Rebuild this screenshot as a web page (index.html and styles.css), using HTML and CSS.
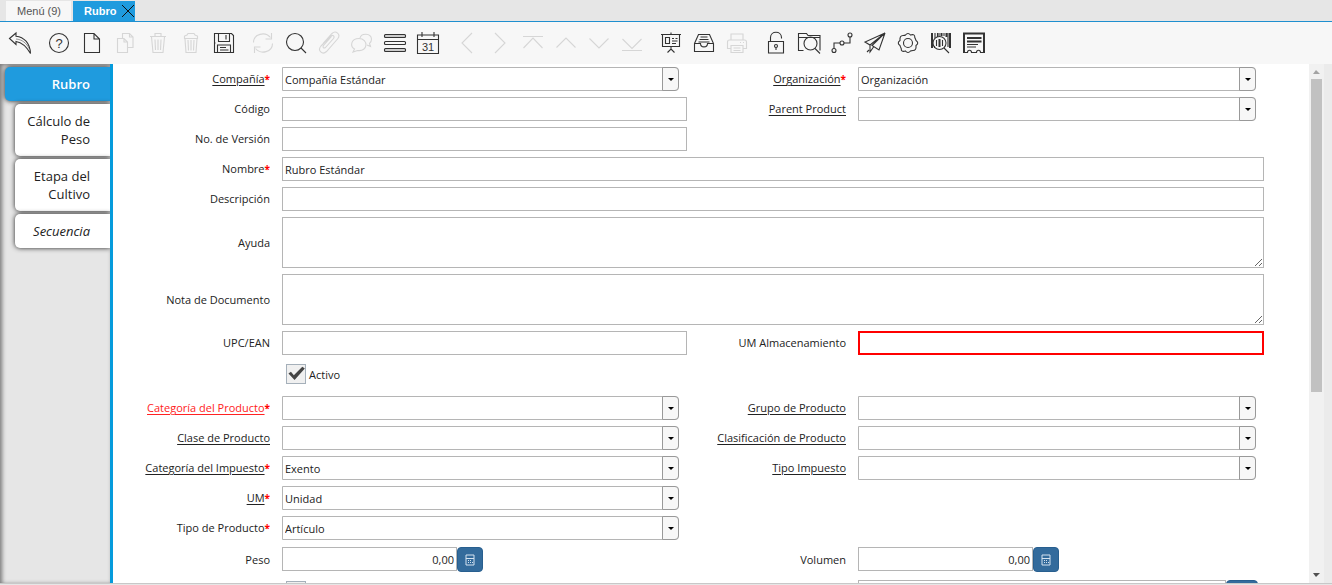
FILE: index.html
```html
<!DOCTYPE html>
<html lang="es">
<head>
    <meta charset="UTF-8">
    <meta name="viewport" content="width=device-width, initial-scale=1.0">
    <title>Rubro</title>
    <link rel="stylesheet" href="styles.css">
</head>
<body>
    <nav class="window-tabs">
        <button class="window-tab">Menú (9)</button>
        <button class="window-tab active">Rubro
            <svg class="close" viewBox="0 0 14 14"><path d="M1 1l12 12M13 1L1 13"/></svg>
        </button>
    </nav>

    <div class="toolbar">
        <div class="group">
            <button aria-label="Deshacer"><svg viewBox="0 0 24 24"><path d="M1.500 7.500L8 2v3.2C16 6 22 12 22.500 22.500 18.500 15.500 14 11.500 8 10.500v3z"/><path class="thin" d="M8 8c6 .5 10.500 4 13.500 10"/></svg></button>
        </div>
        <div class="group">
            <button aria-label="Ayuda"><svg viewBox="0 0 24 24"><circle cx="12" cy="12" r="9.500"/><text x="12" y="16.500" font-size="13">?</text></svg></button>
            <button aria-label="Nuevo"><svg viewBox="0 0 24 24"><path d="M4.500 2.500h9.500l5.500 5.500v13.500h-15zM14 2.500V8h5.500"/></svg></button>
            <button aria-label="Copiar" disabled><svg viewBox="0 0 24 24"><path d="M9.500 7V2.500h7l3.500 3.500v10.500h-5M16.500 2.500V6H20M4.500 7.500h6.500l3.500 3.500v10.500h-10zM11 7.500V11h3.500"/></svg></button>
            <button aria-label="Eliminar" disabled><svg viewBox="0 0 24 24"><path d="M4 5.500h16M9 5V2.500h6V5M5.500 6l1.500 15.500h10L18.500 6M9 8.500l.5 10.500M12 8.500V19M15 8.500l-.5 10.500"/></svg></button>
            <button aria-label="Eliminar registros" disabled><svg viewBox="0 0 24 24"><path d="M5.500 7.500V5L8 4l1-1.500h6L16 4l2.500 1v2.500zM6 8l1 13.500h10L18 8M9 9l.5 10.500M12 9v10.500M15 9l-.5 10.500"/></svg></button>
            <button aria-label="Guardar"><svg viewBox="0 0 24 24"><path d="M2.500 2.500h17l2 2v17h-19zM6.500 2.500v8h11v-8M5.500 21.500v-7.500h13v7.500M14 4v4.500M2.500 12h1"/><path d="M8 16.500h6M8 19h8.500"/></svg></button>
        </div>
        <div class="group">
            <button aria-label="Refrescar" disabled><svg viewBox="0 0 24 24"><path d="M2.500 11.500C2.500 3 14 0 19.500 6.500M20.500 2v6h-6M21.500 12.500c0 8.500-11.500 11.500-17 5M3.500 22v-6h6"/></svg></button>
            <button aria-label="Buscar"><svg viewBox="0 0 24 24"><circle cx="11" cy="11" r="8.500"/><path d="M17 17l5 5"/></svg></button>
            <button aria-label="Adjunto" disabled><svg viewBox="0 0 24 24"><path d="M8.500 16.500l8-9c1.500-2-.5-4-2.500-2.500L4 15c-4 4.500 1.500 9.500 5.500 5.500L20.500 8c4-5-2-9-5.500-5.500L6 12.500M8.500 16.500c-2 1.500-3-.5-2-2l8-9"/></svg></button>
            <button aria-label="Chat" disabled><svg viewBox="0 0 24 24"><path d="M10 7c1-5 11-5.500 11.500 1 0 2-.8 3.500-2 4.500l1 3-3.500-1.500M9 7.500c-8.500 0-9 8-4.500 10.500L3 21l4.500-1.500c11 1.500 11-12 1.500-12z"/></svg></button>
            <button aria-label="Vista de lista"><svg viewBox="0 0 24 24"><rect class="shade" x="1.500" y="3.500" width="21" height="3" rx="1"/><rect x="1.500" y="10.500" width="21" height="3" rx="1"/><rect class="shade" x="1.500" y="17.500" width="21" height="3" rx="1"/></svg></button>
            <button aria-label="Calendario"><svg viewBox="0 0 24 24"><path d="M1.500 4h21v18.500h-21zM1.500 8.500h21M6 1v5M18 1v5"/><text x="12" y="19.500" font-size="11">31</text></svg></button>
        </div>
        <div class="group">
            <button aria-label="Anterior" disabled><svg viewBox="0 0 24 24"><path d="M17 2L7 12l10 10"/></svg></button>
            <button aria-label="Siguiente" disabled><svg viewBox="0 0 24 24"><path d="M7 2l10 10L7 22"/></svg></button>
            <button aria-label="Primero" disabled><svg viewBox="0 0 24 24"><path d="M2 5.500h20M2.500 17L12 7l9.500 10"/></svg></button>
            <button aria-label="Registro anterior" disabled><svg viewBox="0 0 24 24"><path d="M2.500 16.500L12 7l9.500 9.500"/></svg></button>
            <button aria-label="Registro siguiente" disabled><svg viewBox="0 0 24 24"><path d="M2.500 7.500L12 17l9.500-9.500"/></svg></button>
            <button aria-label="Último" disabled><svg viewBox="0 0 24 24"><path d="M2.500 8L12 17.500 21.500 8M2 19.500h20"/></svg></button>
        </div>
        <div class="group">
            <button aria-label="Informe"><svg viewBox="0 0 24 24"><path d="M2 3.500h20M3.500 4v11.500h17V4M12 1.500v2M12 16v3M8.500 21.500L12 18l3.500 3.500M6.500 6.500h4v6h-4zM13 7.500h2M16.500 7.500h2M13 10h5.500M13 12.500h4"/></svg></button>
            <button aria-label="Archivo"><svg viewBox="0 0 24 24"><path d="M2.500 12.500l4-9h11l4 9v8h-19zM2.500 12.500h6c0 4.500 7 4.500 7 0h6M8.500 6h7M7.500 8.500h9M6.500 11h11"/></svg></button>
            <button aria-label="Imprimir" disabled><svg viewBox="0 0 24 24"><path d="M6 9V3h12v6M6 17.500H2.500V11c0-1 .5-2 2-2h15c1.500 0 2 1 2 2v6.500H18M6 14.500h12v7H6zM8.500 17h7M8.500 19.500h7M15 11.500h1M18 11.500h1"/></svg></button>
        </div>
        <div class="group">
            <button aria-label="Bloquear"><svg viewBox="0 0 24 24"><path d="M4.500 10.500h15v11.500h-15zM6.500 10.500V6.500c0-7 11-7 11 0v1"/><circle cx="12" cy="15" r="1.500"/><path d="M12 16.500v2.500"/></svg></button>
            <button aria-label="Visualizar"><svg viewBox="0 0 24 24"><path d="M6.500 19.500h-5v-17h8l1.500 2h12v15M1.500 6.500h21"/><circle cx="13.500" cy="12.500" r="6.500"/><path d="M18 17.500l5 5"/></svg></button>
            <button aria-label="Flujo de trabajo"><svg viewBox="0 0 24 24"><circle cx="4" cy="19.500" r="2"/><circle cx="12" cy="12" r="2"/><circle cx="20" cy="4" r="2"/><path d="M4 17.500V12h6M14 12h6V6"/></svg></button>
            <button aria-label="Solicitudes"><svg viewBox="0 0 24 24"><path d="M22 2L2 11l5 3zM22 2L7 14v7l3.500-5M22 2l-6 17-7-4.500zM4 21l2-2"/></svg></button>
            <button aria-label="Proceso"><svg viewBox="0 0 24 24"><path d="M9.500 4Q12 1 14.500 4 19 2.500 18.800 6.500 20 9 20 9.500 23.500 12 20 14.500 20.500 19.500 17 19.500 15 19.500 14.500 20 12 23 9.500 20 5 21.500 5.200 17.500 4 15 4 14.500.5 12 4 9.500 3.500 4.500 7 4.500 9 4.500 9.500 4z"/><circle cx="12" cy="12" r="4.500"/></svg></button>
            <button aria-label="Código de barras"><svg viewBox="0 0 24 24"><path class="bars" d="M3 2v15M21 2v15M17.500 2v4M12.500 2v3"/><path d="M6 2v5M8.500 2v4M10 2v3M15 2v3M19 2v14M5.500 15v2"/><circle cx="10.500" cy="12" r="6.500"/><path class="bars" d="M10.500 8v8"/><path d="M7.500 9v6M13.500 9v6M15 17l5 5"/></svg></button>
            <button aria-label="Recibo"><svg viewBox="0 0 24 24"><path class="bars" d="M2 22V2.500h20V22"/><path d="M1.500 21.500h4c0-3 4-3 4 0h5c0-3 4-3 4 0h4"/><path class="bars" d="M5 7h14.500M5 10.500h14.500"/><path d="M5 13.500h11M5 16h9"/></svg></button>
        </div>
    </div>

    <main>
        <aside>
            <button class="side-tab selected">Rubro</button>
            <button class="side-tab">Cálculo de Peso</button>
            <button class="side-tab">Etapa del Cultivo</button>
            <button class="side-tab detail">Secuencia</button>
        </aside>

        <form>
            <label class="link required" for="compania">Compañía</label>
            <div class="combo"><select id="compania"><option>Compañía Estándar</option></select></div>
            <label class="link required" for="organizacion">Organización</label>
            <div class="combo"><select id="organizacion"><option>Organización</option></select></div>

            <label for="codigo">Código</label>
            <input type="text" id="codigo">
            <label class="link" for="parent">Parent Product</label>
            <div class="combo"><select id="parent"><option></option></select></div>

            <label for="version">No. de Versión</label>
            <input type="text" id="version">

            <label class="required first" for="nombre">Nombre</label>
            <input type="text" class="wide" id="nombre" value="Rubro Estándar">

            <label for="descripcion">Descripción</label>
            <input type="text" class="wide" id="descripcion">

            <label for="ayuda">Ayuda</label>
            <textarea class="wide" id="ayuda"></textarea>

            <label for="nota">Nota de Documento</label>
            <textarea class="wide" id="nota"></textarea>

            <label for="upc">UPC/EAN</label>
            <input type="text" id="upc">
            <label for="almacen">UM Almacenamiento</label>
            <input type="text" class="invalid" id="almacen">

            <div class="check">
                <input type="checkbox" id="activo" checked>
                <label for="activo">Activo</label>
            </div>

            <label class="link required error first" for="categoria">Categoría del Producto</label>
            <div class="combo"><select id="categoria"><option></option></select></div>
            <label class="link" for="grupo">Grupo de Producto</label>
            <div class="combo"><select id="grupo"><option></option></select></div>

            <label class="link" for="clase">Clase de Producto</label>
            <div class="combo"><select id="clase"><option></option></select></div>
            <label class="link" for="clasificacion">Clasificación de Producto</label>
            <div class="combo"><select id="clasificacion"><option></option></select></div>

            <label class="link required" for="impuesto">Categoría del Impuesto</label>
            <div class="combo"><select id="impuesto"><option>Exento</option></select></div>
            <label class="link" for="tipo-impuesto">Tipo Impuesto</label>
            <div class="combo"><select id="tipo-impuesto"><option></option></select></div>

            <label class="link required" for="um">UM</label>
            <div class="combo"><select id="um"><option>Unidad</option></select></div>

            <label class="required first" for="tipo">Tipo de Producto</label>
            <div class="combo"><select id="tipo"><option>Artículo</option></select></div>

            <label class="first" for="peso">Peso</label>
            <div class="number">
                <input type="text" id="peso" value="0,00">
                <button type="button" aria-label="Calculadora"><svg viewBox="0 0 10 12"><path d="M1 1h8v10H1zM1 4.500h8M3 6.500h1M5 6.500h1M3 8.500h1M5 8.500h1M7 8.500h1"/></svg></button>
            </div>
            <label for="volumen">Volumen</label>
            <div class="number">
                <input type="text" id="volumen" value="0,00">
                <button type="button" aria-label="Calculadora"><svg viewBox="0 0 10 12"><path d="M1 1h8v10H1zM1 4.500h8M3 6.500h1M5 6.500h1M3 8.500h1M5 8.500h1M7 8.500h1"/></svg></button>
            </div>

            <div class="check last">
                <input type="checkbox" aria-label="Almacenado">
            </div>
            <div class="lookup">
                <input type="text" aria-label="Localizador">
                <button type="button" aria-label="Buscar localizador"></button>
            </div>
        </form>

        <div class="scrollbar">
            <span class="arrow up"></span>
            <div class="track"><div class="thumb"></div></div>
            <span class="arrow down"></span>
        </div>
    </main>
    <footer></footer>
</body>
</html>
```

FILE: styles.css
```css
*,
*::before,
*::after {
    box-sizing: border-box;
}
body {
    margin: 0;
    height: 100vh;
    display: flex;
    flex-direction: column;
    overflow: hidden;
    background-color: #ebebeb;
    font-family: "Open Sans", "Noto Sans", sans-serif;
    font-size: 11px;
    color: #222;
}
button {
    border: none;
    padding: 0;
    font-family: inherit;
    cursor: pointer;
}

/* window tabs */
.window-tabs {
    display: flex;
    gap: 2px;
    flex: none;
    height: 22px;
    padding: 1px 6px 0;
    background-color: #e6e6e6;
    border-bottom: 1px solid #1f8fcf;
}
.window-tab {
    display: flex;
    align-items: center;
    padding: 0 10px 0 11px;
    background-color: #f7f7f7;
    font-family: "Liberation Sans", Arial, sans-serif;
    font-size: 11px;
    color: #555;
}
.window-tab.active {
    gap: 5px;
    padding-right: 0;
    background-color: #1f9bde;
    font-weight: bold;
    color: #fff;
}
.close {
    width: 14px;
    height: 14px;
    fill: none;
    stroke: #111;
}

/* toolbar */
.toolbar {
    display: flex;
    gap: 15px;
    flex: none;
    height: 42px;
    padding: 9px 8px;
    background-color: #f7f7f7;
}
.group {
    display: flex;
    gap: 9px;
}
.toolbar button {
    width: 24px;
    height: 24px;
    background: none;
    color: #333;
}
.toolbar button:disabled {
    color: #d6d6d6;
}
.toolbar svg {
    display: block;
    width: 24px;
    height: 24px;
    fill: none;
    stroke: currentColor;
    stroke-width: 1.1;
}
.toolbar text {
    fill: currentColor;
    stroke: none;
    text-anchor: middle;
    font-family: "Liberation Sans", Arial, sans-serif;
}
.toolbar .thin {
    stroke-width: 0.5;
}
.toolbar .shade {
    fill: #ccc;
}
.toolbar .bars {
    stroke-width: 2;
}

main {
    display: flex;
    flex: 1;
    min-height: 0;
    padding-right: 8px;
}

/* side tabs */
aside {
    display: flex;
    flex-direction: column;
    align-items: flex-end;
    gap: 3px;
    flex: none;
    width: 113px;
    padding-top: 3px;
    overflow: hidden;
    background-color: #e6e6e6;
    border-right: 3px solid #059bdc;
    box-shadow: inset 2px 1px 4px #777;
}
.side-tab {
    width: 95px;
    padding: 8px 20px 8px 8px;
    background-color: #fff;
    border-radius: 5px 0 0 5px;
    box-shadow: 0 0 5px #222;
    font-size: 13px;
    line-height: 18px;
    text-align: right;
    color: #222;
}
.side-tab.selected {
    width: 105px;
    background-color: #1f9bde;
    font-weight: 600;
    color: #fff;
}
.side-tab.detail {
    font-style: oblique;
}

/* form */
form {
    display: grid;
    grid-template-columns: 157px 405fr 147px 406fr;
    gap: 6px 12px;
    align-content: start;
    align-items: center;
    flex: 1;
    min-width: 0;
    overflow: hidden;
    padding: 3px 45px 0 0;
    background-color: #fff;
}
label {
    line-height: 16px;
    text-align: right;
}
label.first {
    grid-column: 1;
}
label.link {
    text-decoration: underline;
    text-underline-offset: 2px;
}
label.error {
    color: #f22;
}
label.required::after {
    content: "*";
    display: inline-block;
    font-size: 10px;
    font-weight: bold;
    color: #f00;
}
input[type="text"],
textarea,
select {
    display: block;
    width: 100%;
    height: 24px;
    margin: 0;
    padding: 1px 2px 0;
    border: 1px solid #b5b5b5;
    border-radius: 0;
    outline: none;
    background-color: #fff;
    font-family: inherit;
    font-size: 11px;
    color: #222;
}
textarea {
    height: 51px;
}
.wide {
    grid-column: 2 / -1;
}
input.invalid {
    border: 2px solid #f00;
}
.combo {
    position: relative;
    margin-right: 8px;
}
.combo select {
    appearance: none;
    border-radius: 0 4px 4px 0;
}
.combo::before {
    content: "";
    position: absolute;
    top: 0;
    right: 0;
    width: 17px;
    height: 24px;
    border: 1px solid #999;
    border-radius: 0 4px 4px 0;
    background-color: #f7f7f7;
    pointer-events: none;
}
.combo::after {
    content: "";
    position: absolute;
    top: 11px;
    right: 5px;
    border: 3px solid transparent;
    border-top-color: #000;
    border-bottom: none;
    pointer-events: none;
}
.check {
    grid-column: 2;
    display: flex;
    align-items: center;
    gap: 3px;
    height: 29px;
    padding: 0 4px 4px;
}
.check input {
    appearance: none;
    width: 20px;
    height: 20px;
    margin: 0;
    border: 1px solid #a5b0ba;
    background-color: #f0f0f0;
}
.check input:checked::after {
    content: "";
    display: block;
    width: 18px;
    height: 18px;
    background-color: #444;
    clip-path: polygon(8% 50%, 22% 40%, 38% 60%, 85% 12%, 99% 22%, 42% 86%);
}
.check label {
    padding-top: 2px;
}
.check.last {
    align-items: flex-start;
    padding-top: 1px;
}
.number {
    display: flex;
    height: 28px;
    padding-top: 1px;
}
.number input[type="text"] {
    width: 175px;
    text-align: right;
}
.number button,
.lookup button {
    width: 26px;
    height: 25px;
    border: 1px solid #285f8f;
    border-radius: 4px;
    background-color: #336b9c;
}
.number svg {
    display: block;
    width: 10px;
    height: 12px;
    margin: 0 auto;
    fill: none;
    stroke: #d5e3f0;
}
.lookup {
    grid-column: 4;
    display: flex;
    align-self: start;
    margin-right: 6px;
}
.lookup input[type="text"] {
    flex: 1;
}
.lookup button {
    width: 32px;
}

/* scrollbar */
.scrollbar {
    display: flex;
    flex-direction: column;
    align-items: center;
    flex: none;
    width: 15px;
    background-color: #f1f1f1;
}
.arrow {
    width: 15px;
    height: 15px;
    clip-path: polygon(4px 10px, 11px 10px, 7px 6px);
    background-color: #a3a3a3;
}
.arrow.down {
    clip-path: polygon(4px 5px, 11px 5px, 7px 9px);
    background-color: #505050;
}
.track {
    flex: 1;
    width: 11px;
}
.thumb {
    height: 64%;
    background-color: #c1c1c1;
}
footer {
    flex: none;
    height: 2px;
    border-top: 1px solid #c8c8c8;
    background-color: #e6e6e6;
}
```
